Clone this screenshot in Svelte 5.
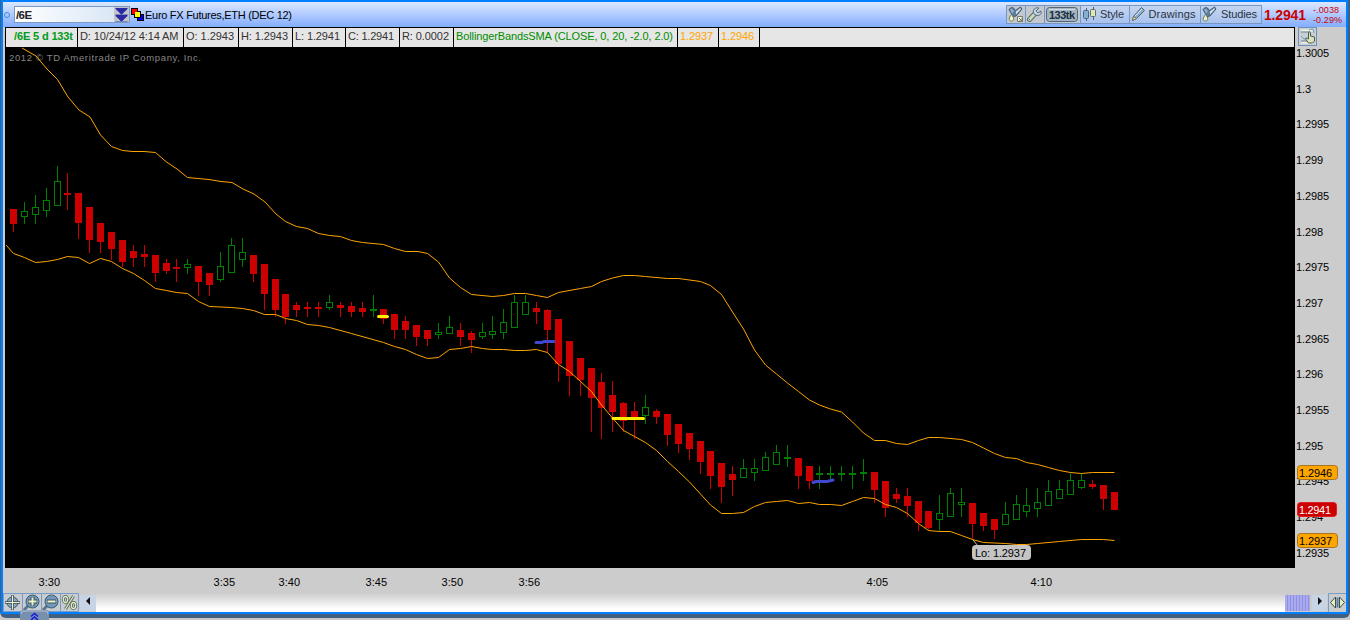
<script>
    // x, high, body top, body bottom, low, rising
    const candles = [
        [13,209,209,224,232,0],[24,202,211,217,224,1],[35,195,207,215,224,1],[46,188,200,211,217,1],
        [57,166,181,206,206,1],[67,173,193,195,210,0],[78,193,193,223,239,0],[89,207,207,240,253,0],
        [100,223,223,242,253,0],[111,232,232,249,260,0],[122,240,240,262,267,0],[133,245,251,258,267,0],
        [144,245,254,257,267,0],[155,255,255,273,282,0],[166,259,263,271,274,0],[176,259,267,269,282,0],
        [187,259,264,268,274,1],[198,266,266,282,296,0],[209,273,273,285,296,0],[220,252,266,280,282,1],
        [231,238,245,273,273,1],[242,238,252,260,267,1],[253,255,255,274,282,0],[264,264,264,294,310,0],
        [275,279,279,310,317,0],[285,294,294,317,324,0],[296,302,305,310,317,0],[307,302,307,309,317,0],
        [318,302,307,309,317,0],[329,295,302,308,310,1],[340,302,305,308,317,0],[351,302,306,312,317,0],
        [362,302,308,312,317,0],[373,295,309,311,317,1],[383,309,309,319,324,0],[394,314,314,330,339,0],
        [405,316,321,330,339,0],[416,325,325,337,346,0],[427,330,330,339,346,0],[438,323,332,335,339,1],
        [449,316,327,334,334,1],[460,323,330,337,346,0],[471,331,333,340,353,0],[482,323,332,337,339,1],
        [492,316,331,335,339,1],[503,309,322,333,339,1],[514,295,302,328,328,1],[525,295,302,315,315,1],
        [536,302,308,312,324,0],[547,309,310,330,353,0],[558,319,319,364,382,0],[569,341,341,376,396,0],
        [580,358,358,380,396,0],[591,368,368,398,432,0],[601,373,382,408,439,0],[612,381,395,412,432,0],
        [623,402,403,421,432,0],[634,402,411,419,439,0],[645,395,407,416,424,1],[656,409,411,417,424,0],
        [667,414,414,435,446,0],[678,424,424,444,453,0],[689,433,433,449,460,0],[700,441,441,462,474,0],
        [710,451,451,476,489,0],[721,463,463,487,503,0],[732,466,474,480,496,0],[743,459,468,478,478,1],
        [754,459,468,473,481,1],[765,452,457,471,471,1],[776,445,452,465,465,1],[787,445,457,459,467,1],
        [798,458,458,476,489,0],[809,466,466,481,489,0],[819,466,473,475,489,1],[830,466,473,475,481,1],
        [841,466,473,475,481,1],[852,466,473,475,489,1],[863,459,472,474,481,1],[874,472,472,490,503,0],
        [885,481,481,508,517,0],[896,488,494,499,503,0],[907,488,496,506,517,0],[918,501,501,523,531,0],
        [928,511,511,528,530,0],[939,495,513,520,531,1],[950,488,493,517,517,1],[961,488,502,505,517,1],
        [972,503,503,524,539,0],[983,513,513,526,531,0],[994,519,519,530,539,0],[1005,502,514,525,525,1],
        [1016,495,504,520,520,1],[1026,488,505,512,517,1],[1037,488,502,509,517,1],[1048,480,491,506,506,1],
        [1059,480,489,499,499,1],[1070,473,480,495,495,1],[1081,473,480,488,489,1],[1092,480,484,487,489,0],
        [1103,485,485,499,510,0],[1114,492,492,510,510,0]
    ];

    const upper = "22,48 36,56 47,69 57.5,79.5 68,97 79,110 90,117 100.5,135 111.5,146.5 122.5,150.5 133,151.5 144,151.5 155.5,152.5 166.5,162 177,169 187.5,177.5 198,178.5 209,179.5 221,181.5 232,182.5 243,189 254,194 265,202 276,214 285.5,221.5 296.5,226.5 307.5,228.5 318.5,233.5 329.5,235.5 340.5,236.5 351.5,240.5 362.5,242.5 383.5,244.5 394.5,248.5 405.5,251.5 418,251.5 427.5,253.5 438.5,262 449.5,278 460.5,287.5 471.5,294.5 492.5,296.5 503.5,295.5 514.5,293.5 525.5,293.5 536.5,295.5 547.5,297.5 558.5,292.5 580.5,288.5 591.5,286.5 601.5,281.5 612.5,278 623.5,275.5 634.5,275.5 645.5,276.5 667.5,278.5 678.5,278.5 700.5,281.5 710.5,285.5 721.5,294.5 732.5,312 743.5,329 754.5,350 765.5,365 776.5,374 787.5,383 798.5,391.5 809.5,400 819.5,405 830.5,409 841.5,412 852.5,422 863.5,433 874.5,440.5 885.5,440.5 896.5,443.5 907.5,444.5 918.5,440.5 928.5,437.5 939.5,437.5 961.5,439.5 972.5,442.5 983.5,448 994.5,453.5 1005.5,457.5 1016.5,458.5 1026.5,462.5 1037.5,464.5 1048.5,467.5 1059.5,470.5 1070.5,472.5 1081.5,473.5 1092.5,472.5 1114.5,472.5";
    const lower = "6,245 13.5,253.5 24.5,257.5 35.5,262.5 46.5,261.5 57.5,259.5 67.5,256.5 78.5,257.5 89.5,263.5 100.5,258.5 111.5,261.5 122.5,268.5 133.5,273.5 144.5,280.5 155.5,288.5 166.5,290.5 176.5,292.5 187.5,293.5 198.5,301.5 209.5,306.5 231.5,307.5 242.5,308.5 253.5,310.5 264.5,314.5 275.5,314.5 285.5,318.5 296.5,320.5 307.5,324.5 318.5,325.5 329.5,327.5 351.5,333.5 383.5,342.5 394.5,346.5 405.5,349.5 416.5,354.5 427.5,358.5 438.5,357.5 449.5,349.5 460.5,348.5 471.5,346.5 482.5,348.5 492.5,349.5 503.5,349.5 514.5,350.5 525.5,350.5 536.5,349.5 547.5,352.5 558.5,364.5 569.5,371.5 580.5,381.5 591.5,391.5 601.5,405 612.5,418 623.5,430.5 634.5,436.5 645.5,442.5 656.5,450.5 667.5,461.5 678.5,471.5 689.5,482 700.5,494 710.5,505 721.5,513.5 732.5,513.5 743.5,512.5 754.5,506.5 765.5,502.5 776.5,501.5 787.5,500.5 798.5,503.5 809.5,502.5 819.5,504.5 830.5,504.5 841.5,505.5 852.5,501.5 863.5,497.5 874.5,498.5 885.5,504.5 896.5,507.5 907.5,513.5 918.5,523.5 928.5,530.5 939.5,531.5 950.5,531.5 961.5,535.5 972.5,539.5 983.5,542.5 1005.5,543.5 1016.5,544.5 1026.5,544.5 1037.5,543.5 1059.5,541.5 1081.5,539.5 1103.5,539.5 1114.5,540.5";

    const cells = [
        { text: "/6E 5 d 133t", w: 71, len: 59, x: 8, kind: "name" },
        { text: "D: 10/24/12 4:14 AM", w: 105, len: 98.5, x: 2, kind: "" },
        { text: "O: 1.2943", w: 54, len: 48, x: 2, kind: "" },
        { text: "H: 1.2943", w: 53, len: 47, x: 2, kind: "" },
        { text: "L: 1.2941", w: 52, len: 45, x: 2, kind: "" },
        { text: "C: 1.2941", w: 53, len: 46, x: 2, kind: "" },
        { text: "R: 0.0002", w: 53, len: 47, x: 2, kind: "" },
        { text: "BollingerBandsSMA (CLOSE, 0, 20, -2.0, 2.0)", w: 223, len: 217, x: 2, kind: "study" },
        { text: "1.2937", w: 40, len: 33, x: 2, kind: "band" },
        { text: "1.2946", w: 40, len: 33, x: 2, kind: "band" }
    ];

    const prices = ["1.3005", "1.3", "1.2995", "1.299", "1.2985", "1.298", "1.2975", "1.297", "1.2965", "1.296", "1.2955", "1.295", "1.2945", "1.294", "1.2935"];
    const times = [[38, "3:30"], [213, "3:35"], [278, "3:40"], [365, "3:45"], [441, "3:50"], [518, "3:56"], [866, "4:05"], [1030, "4:10"]];
</script>

{#snippet flask()}
    <path d="M2 3.500C3 2 5 1 6.500 2l2 2.500L13.500 1l1.500 2-6 7-3 .5z" fill="#5f7f9c" stroke="#42596e" />
    <path d="M9 5.500L13.500 2l.5 1-5 5.500z" fill="#d5e7f5" />
    <path d="M3 3.500l2-1 2 3-2 2z" fill="#8fb0cc" />
    <path d="M4.500 8.500c-3 3.500-3 6.500 0 6.500s3-3 0-6.500z" fill="#f0f3c4" stroke="#6a7b63" />
{/snippet}

<div class="desktop">
    <div class="shadow">
        <div class="window">
            <header>
                <span class="dot"></span>
                <div class="symbol">
                    <b>/6E</b>
                    <svg class="drop" width="15" height="15" viewBox="0 0 15 15">
                        <rect width="15" height="15" fill="#c4c4c8" />
                        <path d="M1.500 1h12v1l-6 5.500-6-5.500zM1.500 8h12v1l-6 5.500-6-5.500z" fill="#2929a3" />
                        <path d="M1.500 7.500h12M1.500 14.500h12" stroke="#7484bd" />
                        <path d="M5 5h5l-2.500 2.500zM5 12h5l-2.500 2.500z" fill="#2929a3" />
                    </svg>
                </div>
                <svg class="link" width="13" height="13" viewBox="0 0 13 13" shape-rendering="crispEdges">
                    <path d="M0 0h7v7H0z" fill="#000" /><path d="M1 1h5v5H1z" fill="#f00" />
                    <path d="M6 6h7v7H6z" fill="#000" /><path d="M7 7h5v5H7z" fill="#00f" />
                    <path d="M3 3h7v7H3z" fill="#000" /><path d="M4 4h5v5H4z" fill="#ff0" />
                    <path d="M0 0h7v3H3v4H0z" fill="#000" /><path d="M1 1h5v3H4v2H1z" fill="#f00" />
                </svg>
                <svg class="title" width="150" height="18"><text x="0" y="12.500" textLength="147">Euro FX Futures,ETH (DEC 12)</text></svg>

                <div class="tools">
                    <span class="tool" style="width: 19px">
                        <svg width="17" height="17" viewBox="0 0 17 17">
                            {@render flask()}
                            <path d="M10.500 10.500h5v5h-5zM12 12l3 3m0-3v3h-3" fill="#f2f2d6" stroke="#73796b" />
                        </svg>
                    </span>
                    <span class="tool" style="width: 19px">
                        <svg width="17" height="17" viewBox="0 0 17 17">
                            <path d="M3.500 13.500L9 7.500" stroke="#566b7d" stroke-width="5" stroke-linecap="round" />
                            <path d="M3.500 13.500L9 7.500" stroke="#cfdab4" stroke-width="3" stroke-linecap="round" />
                            <path d="M8 8C6 4 9 1 13 2l-3 3 2 2 3-2c1 4-3 6-7 3z" fill="#c6d6df" stroke="#53697c" />
                            <path d="M3 13.500h1" stroke="#566b7d" />
                        </svg>
                    </span>
                    <span class="tool" style="width: 36px">
                        <svg width="34" height="17" viewBox="0 0 34 17">
                            <rect x="1.500" y="1.500" width="31" height="14" rx="3" fill="#a2b3c1" stroke="#526777" />
                            <path d="M4 3.500h26" stroke="#d4dde4" />
                            <text class="ticks" x="4" y="12.500" textLength="26">133tk</text>
                        </svg>
                    </span>
                    <span class="tool" style="width: 49px">
                        <svg width="47" height="17" viewBox="0 0 47 17">
                            <path d="M5.500 2v13M12.500 1v13" stroke="#4a6074" />
                            <rect x="2.500" y="4.500" width="5" height="8" rx="1" fill="#86afd0" stroke="#476481" />
                            <rect x="9.500" y="3.500" width="5" height="7" rx="1" fill="#dce8b8" stroke="#60725d" />
                            <text x="19" y="12" textLength="24">Style</text>
                        </svg>
                    </span>
                    <span class="tool" style="width: 71px">
                        <svg width="69" height="17" viewBox="0 0 69 17">
                            <path d="M2.500 14.500l1-4 8-9 3 3-8 8z" fill="#8eafca" stroke="#486078" />
                            <path d="M5 10l7-7" stroke="#e1edf5" /><path d="M2.500 14.500l1-4 3 2z" fill="#f0efbd" stroke="#70745b" />
                            <text x="18.500" y="12" textLength="47">Drawings</text>
                        </svg>
                    </span>
                    <span class="tool last" style="width: 62px">
                        <svg width="60" height="17" viewBox="0 0 60 17">
                            {@render flask()}
                            <text x="20" y="12" textLength="36">Studies</text>
                        </svg>
                    </span>
                </div>
                <svg class="quote" width="84" height="25">
                    <text class="last-price" x="2" y="18" textLength="42">1.2941</text>
                    <text class="change" x="51" y="11" textLength="26">-.0038</text>
                    <text class="change" x="51" y="21" textLength="29">-0.29%</text>
                </svg>
            </header>

            <div class="body">
                <div class="chart">
                    <div class="info">
                        {#each cells as cell}
                            <svg class="cell {cell.kind}" width={cell.w + 1} height="19">
                                <text x={cell.x} y="12" textLength={cell.len}>{cell.text}</text>
                            </svg>
                        {/each}
                    </div>
                    <svg class="plot" width="1290" height="521" viewBox="5 47 1290 521">
                        <rect x="5" y="47" width="1290" height="521" />
                        <g shape-rendering="crispEdges">
                            {#each candles as [x, high, top, bottom, low, up]}
                                {#if up}
                                    <rect {x} y={high} width="1" height={top - high} fill="#008000" />
                                    <rect {x} y={bottom} width="1" height={low - bottom} fill="#008000" />
                                    <rect x={x - 2.5} y={top + 0.5} width="6" height={bottom - top - 1} fill="#000" stroke="#008000" />
                                {:else}
                                    <rect {x} y={high} width="1" height={low - high} fill="#c00" />
                                    <rect x={x - 3} y={top} width="7" height={bottom - top} fill="#c00" />
                                {/if}
                            {/each}
                        </g>
                        <text class="copyright" x="9" y="61" textLength="192">2012 © TD Ameritrade IP Company, Inc.</text>
                        <polyline points={upper} />
                        <polyline points={lower} />
                        <path class="mark" d="M378.500 316.500h9M613 418.500h30.500" stroke="#fff000" />
                        <path class="mark" d="M536 342.500h6l2-1h10M813 482.500l3-1h11l6-1.500" stroke="#4048d0" />
                        <path d="M973 540l5 6" stroke="#bbb" />
                        <rect x="972" y="545" width="59" height="15" rx="4" fill="#c4c4c4" />
                        <text class="low" x="975" y="557" textLength="51">Lo: 1.2937</text>
                    </svg>
                </div>
                <aside>
                    <svg class="hand" width="19" height="19" viewBox="0 0 19 19">
                        <rect x=".5" y=".5" width="18" height="18" fill="#c9cfd3" stroke="#6d91bd" />
                        <path d="M3 3.500h12M3 15.500h12" stroke="#f1f2dd" stroke-width="2" />
                        <path d="M3 5h9M3 14h6" stroke="#698099" />
                        <path d="M3 9l3 3 3-1M11 3l4-1 1 4" stroke="#719dc3" fill="none" />
                        <path d="M10.500 11V6c0-1.500 2-1.500 2 0v3l4 1v4l-2 2h-4l-3-4c0-1 2-1 3 0z" fill="#dbe3bc" stroke="#485b51" />
                    </svg>
                    <div class="prices">
                        {#each prices as price}
                            <svg width="45" height="14"><text x="1" y="11" textLength={price.length == 6 ? 33 : price.length == 5 ? 27 : 15}>{price}</text></svg>
                        {/each}
                    </div>
                    <svg class="badge top" width="41" height="15"><rect x=".5" y=".5" width="40" height="14" rx="3" /><text x="2" y="11.500" textLength="33">1.2946</text></svg>
                    <svg class="badge red" width="41" height="15"><rect x=".5" y=".5" width="39" height="14" rx="3" /><text x="2" y="11.500" textLength="32">1.2941</text></svg>
                    <svg class="badge low-band" width="41" height="15"><rect x=".5" y=".5" width="40" height="14" rx="3" /><text x="2" y="11.500" textLength="33">1.2937</text></svg>
                </aside>
            </div>

            <svg class="times" width="1343" height="25" viewBox="3 568 1343 25">
                {#each times as [x, label]}
                    <text x={x + 0.5} y="586" textLength="21.5">{label}</text>
                {/each}
            </svg>

            <footer>
                <svg class="nav" width="76" height="19" viewBox="0 0 76 19">
                    <path d="M.5 .5h75v18H.5zM19.500 0v19M38.500 0v19M57.500 0v19" fill="#c8ccd0" stroke="#789cc8" />
                    <circle cx="9.500" cy="9.500" r="5.500" fill="#8aaac2" stroke="#38556b" />
                    <path d="M9.500 2v15M2 9.500h15" stroke="#38495a" stroke-width="2.600" />
                    <path d="M9.500 2.500v14M2.500 9.500h14" stroke="#eef2c9" stroke-width="1.200" />
                    <path d="M25 13l-4 4M44 13l-4 4" stroke="#58758c" stroke-width="3" />
                    <circle cx="29.500" cy="8.500" r="6.500" fill="#7199b8" stroke="#3c5972" />
                    <circle cx="48.500" cy="8.500" r="6.500" fill="#7199b8" stroke="#3c5972" />
                    <path d="M29.500 4v9M25 8.500h9M44 8.500h9" stroke="#3e5564" stroke-width="4" />
                    <path d="M29.500 4.500v8M25.500 8.500h8M44.500 8.500h8" stroke="#edf3c8" stroke-width="2" />
                    <g fill="none" stroke="#50645c" stroke-width="3"><ellipse cx="62.500" cy="6.500" rx="2.200" ry="3" /><ellipse cx="70.500" cy="12.500" rx="2.200" ry="3" /><path d="M62.500 16l8-13" /></g>
                    <g fill="none" stroke="#e1eac0" stroke-width="1.300"><ellipse cx="62.500" cy="6.500" rx="2.200" ry="3" /><ellipse cx="70.500" cy="12.500" rx="2.200" ry="3" /><path d="M62.500 16l8-13" /></g>
                </svg>
                <span class="arrow"><svg width="16" height="16"><path d="M10 2v8L6 6z" fill="#111" /></svg></span>
                <div class="track"></div>
                <div class="thumb"></div>
                <span class="arrow right"><svg width="15" height="16"><path d="M6 2v8l4-4z" fill="#111" /></svg></span>
                <svg width="18" height="19" viewBox="0 0 18 19">
                    <path d="M.5 19V.5H18" fill="none" stroke="#789cc8" />
                    <path d="M7.500 4v11l-5-5.500zM11.500 4v11l5-5.500z" fill="#e6edbf" stroke="#3b5150" />
                    <path d="M9.500 4.500v10" stroke="#547ba0" stroke-width="2" />
                </svg>
            </footer>
        </div>
    </div>
    <svg class="tab" width="29" height="10" viewBox="0 0 29 10">
        <path d="M0 10V3q0-3 3-3h23q3 0 3 3v7z" fill="#7890ad" />
        <path d="M1 4q0-3 3-3h21q3 0 3 3" fill="none" stroke="#b5c2d3" />
        <path d="M11 6.500l3.500-3 3.500 3M11 10l3.500-3 3.500 3" fill="none" stroke="#1515e0" stroke-width="1.500" />
    </svg>
</div>

<style>
    :global(body) {
        margin: 0;
        overflow: hidden;
    }

    .desktop {
        width: 1350px;
        height: 620px;
        position: relative;
        background: #c9c9c9;
        font-family: "Liberation Sans", Arial, sans-serif;
        font-size: 11px;
    }

    svg {
        display: block;
        flex: none;
    }

    .shadow {
        height: 618px;
        background: #415f80;
        border-radius: 0 0 6px 6px;
    }

    .window {
        height: 614px;
        margin: 0 2px 0 1px;
        box-sizing: border-box;
        border: 2px solid #0080ff;
        background: #ccc;
    }

    header {
        height: 25px;
        display: flex;
        align-items: center;
        background: linear-gradient(#dce8ff, #84adff);
    }

    .dot {
        width: 4px;
        height: 4px;
        margin: 0 4px 0 1px;
        border: 1px solid #3d8be0;
        border-radius: 50%;
    }

    .symbol {
        width: 116px;
        height: 17px;
        box-sizing: border-box;
        border: 1px solid #7b9ac3;
        display: flex;
        align-items: center;
        justify-content: space-between;
        background: linear-gradient(90deg, #fff, #d5e3f4);
    }

    .symbol b {
        padding-left: 1px;
        font-size: 11.5px;
        letter-spacing: -0.6px;
        color: #222;
    }

    .link {
        margin: 0 1px;
    }

    .tools {
        display: flex;
        margin-left: auto;
        height: 19px;
    }

    .tool {
        box-sizing: border-box;
        height: 19px;
        border: 1px solid #7597c3;
        border-right: 0;
        background: linear-gradient(#c5d5ee, #a9c2ee);
    }

    .tool:nth-child(-n+3) {
        background: #c3c8ce;
    }

    .tool text {
        fill: #273442;
    }

    .tool .ticks {
        font-weight: bold;
        fill: #1c2f3e;
    }

    .last {
        border-right: 1px solid #7597c3;
    }

    .last-price {
        font-size: 14px;
        font-weight: bold;
        fill: #c00;
    }

    .change {
        font-size: 9px;
        fill: #c00;
    }

    .body {
        display: flex;
        padding-left: 2px;
        height: 541px;
    }

    .chart {
        width: 1290px;
    }

    .info {
        height: 20px;
        box-sizing: border-box;
        display: flex;
        border: 1px solid #000;
        border-bottom: 0;
        background: #e6e6e6;
    }

    .cell {
        box-sizing: border-box;
        border-right: 1px solid #000;
        fill: #333;
    }

    .name {
        font-weight: bold;
        fill: #009c20;
    }

    .study {
        fill: #008c00;
    }

    .band {
        fill: #ffa500;
    }

    .copyright {
        font-size: 9.5px;
        fill: #868686;
    }

    polyline {
        fill: none;
        stroke: #ffa500;
        stroke-width: 1;
    }

    .mark {
        fill: none;
        stroke-width: 3;
        stroke-linecap: round;
    }

    aside {
        width: 51px;
        position: relative;
    }

    .hand {
        margin-left: 3px;
    }

    .prices {
        height: 514px;
        display: flex;
        flex-direction: column;
        justify-content: space-between;
    }

    .badge {
        position: absolute;
        left: 2px;
        fill: #000;
    }

    .badge rect {
        fill: #ffa500;
        stroke: #a97521;
    }

    .top {
        top: 438px;
    }

    .red {
        top: 475px;
        fill: #fff;
    }

    .red rect {
        fill: #c00;
        stroke: #e02020;
    }

    .low-band {
        top: 506px;
    }

    footer {
        display: flex;
        height: 19px;
    }

    .arrow {
        width: 16px;
        height: 16px;
        margin: 2px 0 0 1px;
        background: #c7d4e6;
    }

    .track {
        flex: 1;
        background: linear-gradient(#ccc, #fff 85%);
    }

    .thumb {
        width: 25px;
        height: 16px;
        margin-top: 2px;
        background: repeating-linear-gradient(90deg, #aaaaf0 0 2px, #9090dc 2px 3px);
    }

    .right {
        width: 15px;
        margin: 2px 1px 0 2px;
    }

    .tab {
        position: absolute;
        left: 20px;
        top: 610px;
    }
</style>
